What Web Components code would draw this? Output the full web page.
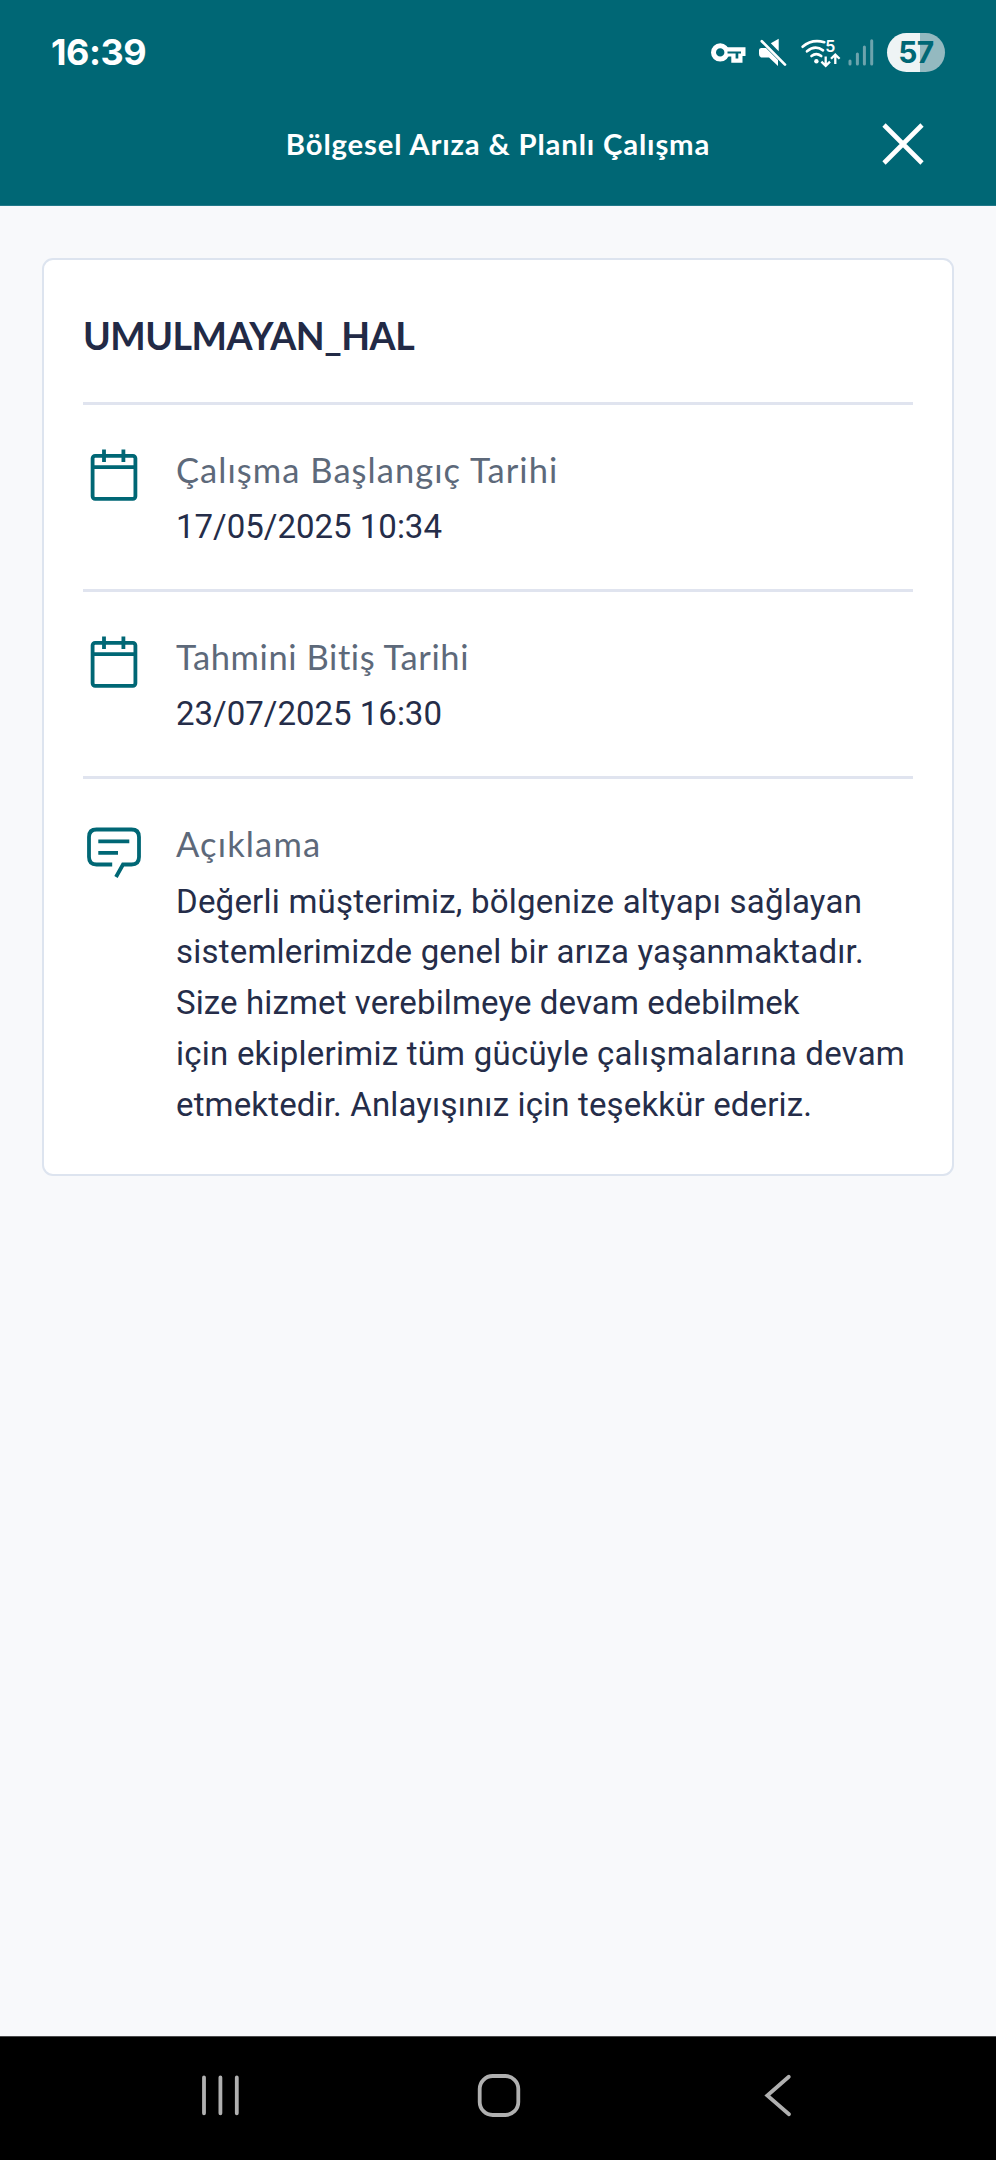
<!DOCTYPE html>
<html lang="tr">
<head>
<meta charset="utf-8">
<title>Bölgesel Arıza &amp; Planlı Çalışma</title>
<style>
html, body { margin: 0; height: 100%; }
body { background: #f8f9fb; font-family: Lato, "Open Sans", sans-serif; overflow: hidden; }
</style>
</head>
<body>
<app-screen>
  <status-bar slot="top" time="16:39" battery="57"></status-bar>
  <title-bar slot="top">Bölgesel Arıza &amp; Planlı Çalışma</title-bar>
  <outage-card>
    <span slot="heading">UMULMAYAN_HAL</span>
    <info-row icon="calendar"><span slot="label" style="letter-spacing:1.05px">Çalışma Başlangıç Tarihi</span>17/05/2025 10:34</info-row>
    <info-row icon="calendar"><span slot="label" style="letter-spacing:.58px">Tahmini Bitiş Tarihi</span>23/07/2025 16:30</info-row>
    <info-row icon="comment" class="long"><span slot="label" style="letter-spacing:1.15px">Açıklama</span>Değerli müşterimiz, bölgenize altyapı sağlayan<br><span style="letter-spacing:.2px">sistemlerimizde genel bir arıza yaşanmaktadır.</span><br><span style="letter-spacing:.12px">Size hizmet verebilmeye devam edebilmek</span><br>için ekiplerimiz tüm gücüyle çalışmalarına devam<br><span style="letter-spacing:.15px">etmektedir. Anlayışınız için teşekkür ederiz.</span></info-row>
  </outage-card>
  <nav-bar slot="bottom"></nav-bar>
</app-screen>
<script>
const define = (name, markup, setup) => customElements.define(name, class extends HTMLElement {
  connectedCallback() {
    if (this.shadowRoot) return;
    const root = this.attachShadow({ mode: 'open' });
    root.innerHTML = markup;
    if (setup) setup(this, root);
  }
});

define('app-screen', `
<style>
:host { display: flex; flex-direction: column; width: 996px; height: 2160px; background: #f8f9fb; }
header { height: 205px; background: #006775; border-bottom: 1px solid #21798a; }
main { flex: 1; padding: 52px 42px 0; }
</style>
<header><slot name="top"></slot></header>
<main><slot></slot></main>
<slot name="bottom"></slot>`);

define('status-bar', `
<style>
:host { display: flex; justify-content: space-between; height: 105px; color: #fff; font-family: Inter, sans-serif; }
.time { margin: 30px 0 0 51px; font-weight: 650; font-size: 36px; line-height: 44px; letter-spacing: -.5px; }
.icons { display: flex; margin: 20px 51px 0 0; height: 70px; }
svg { display: block; width: 197px; height: 70px; }
svg text { font: 600 16px Inter, sans-serif; fill: #fff; }
.battery { margin-top: 13px; width: 58px; height: 39px; border-radius: 20px; background: linear-gradient(90deg, #eef4f5 33px, #94b9c0 33px); color: #006775; font: 700 30px/39px Inter, sans-serif; text-align: center; letter-spacing: -.5px; }
</style>
<div class="time"></div>
<div class="icons">
<svg viewBox="0 0 197 70" fill="none" stroke="#fff">
  <path d="M36 27.2H55.5V36H52.5V42.7H41.3V36.5H36Z" fill="#fff" stroke="none"/>
  <circle cx="30.2" cy="32.4" r="6.7" stroke-width="5"/>
  <path d="M37.5 31.6H51V33.4H48.3V38.6H45.6V33.4H37.5Z" fill="#006775" stroke="none"/>
  <path d="M80.8 23.3L88.7 18.8V31.2ZM71 28H76L88 40V46L79 37.5H71Q69 37 69 34V30Q69 28.5 71 28Z" fill="#fff" stroke="none"/>
  <path d="M74 19.7L96.7 42.4" stroke="#006775" stroke-width="2.2"/>
  <path d="M71.8 21.2L95 44.6" stroke-width="2.7" stroke-linecap="round"/>
  <path d="M112.6 26.7Q122 18.6 134.3 22.2M117 31.3Q125 24.6 133 30.3M121.5 36Q126.3 32.3 131.2 36" stroke-width="2.7" stroke-linecap="round"/>
  <circle cx="126.4" cy="41.3" r="2.2" fill="#fff" stroke="none"/>
  <text x="135.3" y="31.8" stroke="none">5</text>
  <path d="M135.7 36.6V45.6M131.4 41.6L135.7 45.8L140 41.6M145.3 44V34.8M141 38.8L145.3 34.6L149.6 38.8" stroke-width="2.3"/>
  <path d="M160 41V44M167.4 34V44M174.4 27V44M181.7 20.8V44" stroke="#6da4ad" stroke-width="3" stroke-linecap="round"/>
</svg>
<div class="battery"></div>
</div>`, (host, root) => {
  root.querySelector('.time').textContent = host.getAttribute('time');
  root.querySelector('.battery').textContent = host.getAttribute('battery');
});

define('title-bar', `
<style>
:host { display: grid; grid-template-columns: 140px 1fr 140px; align-items: center; height: 78px; color: #fff; font-weight: 700; font-size: 29.3px; line-height: 40px; letter-spacing: .84px; text-align: center; white-space: nowrap; }
svg { display: block; width: 46px; height: 46px; margin-left: 24px; margin-top: -1px; }
</style>
<span></span><div><slot></slot></div>
<svg viewBox="0 0 46 46"><path d="M4 4L42 42M42 4L4 42" stroke="#fff" stroke-width="4.6"/></svg>`);

define('outage-card', `
<style>
:host { display: block; box-sizing: border-box; width: 912px; height: 918px; padding: 0 39px; background: #fff; border: 2px solid #dde4ef; border-radius: 11px; }
h1 { margin: 0; padding: 51px 0 40.6px 0; height: 50px; font-weight: 700; font-size: 37.5px; line-height: 50px; letter-spacing: -.5px; color: #222a46; }
</style>
<h1><slot name="heading"></slot></h1>
<slot></slot>`);

const glyphs = {
  calendar: '<rect x="9.6" y="10.8" width="42.8" height="43" rx="2.5"/><path d="M9 22.2H53M21 4.6V17M40.4 4.6V17"/>',
  comment: '<path d="M29.2 45.5H13.5Q6 45.5 6 38V18Q6 10.5 13.5 10.5H48.5Q56 10.5 56 18V38Q56 45.5 48.5 45.5H40L33 58M15.3 22.3H46.3M15.3 33.8H35"/>'
};
define('info-row', `
<style>
:host { display: flex; box-sizing: border-box; height: 187.3px; border-top: 3px solid #e0e4ef; padding-top: 40px; }
svg { flex: none; width: 60px; height: 64px; margin-right: 33px; overflow: visible; }
.label { font-size: 34.5px; line-height: 50px; color: #5d697a; white-space: nowrap; }
.value { margin-top: 7.6px; font-family: Roboto, sans-serif; font-size: 33px; line-height: 50.7px; color: #252d49; white-space: nowrap; }
:host(.long) .value { letter-spacing: .23px; }
</style>
<svg viewBox="0 0 60 64" fill="none" stroke="#006775" stroke-width="3.8"></svg>
<div><div class="label"><slot name="label"></slot></div><div class="value"><slot></slot></div></div>`,
(host, root) => {
  root.querySelector('svg').innerHTML = glyphs[host.getAttribute('icon')];
});

define('nav-bar', `
<style>
:host { display: block; box-sizing: border-box; height: 124px; background: #000; border-top: 1px solid #4a4a4c; }
svg { display: block; width: 996px; height: 123px; }
</style>
<svg viewBox="0 2037 996 123" fill="none" stroke="#b0b0b0" stroke-width="3.8" stroke-linecap="round">
  <path d="M204 2077.5V2113.3M220.4 2077.5V2113.3M236.8 2077.5V2113.3"/>
  <rect x="479.7" y="2076" width="38.6" height="39" rx="13"/>
  <path d="M788.8 2076.7L767.3 2095.5L789 2114.3"/>
</svg>`);
</script>
</body>
</html>
